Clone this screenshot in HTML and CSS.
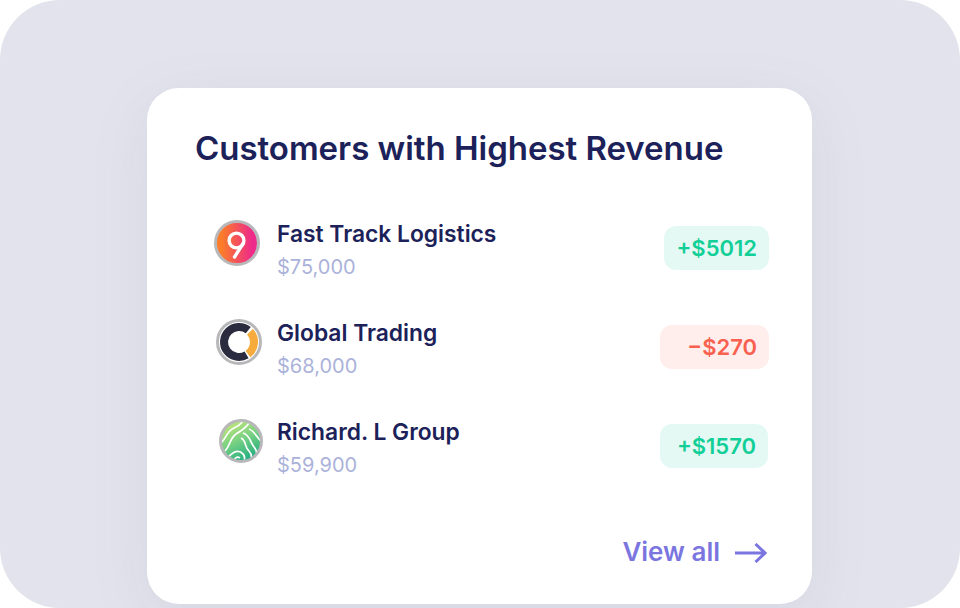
FILE: index.html
```html
<!DOCTYPE html>
<html lang="en">
<head>
<meta charset="utf-8">
<title>Customers with Highest Revenue</title>
<link rel="stylesheet" href="styles.css">
</head>
<body>
<main class="stage">
  <section class="card">
    <h1 class="title">Customers with Highest Revenue</h1>
    <ul class="rows">
      <li class="row">
        <div class="slot">
          <svg class="logo logo-a" viewBox="0 0 46 46" aria-hidden="true">
            <defs><linearGradient id="g1" x1="0" x2="1" y1="0" y2="0"><stop offset="0.15" stop-color="#fb7c2a"/><stop offset="0.85" stop-color="#ee2a8a"/></linearGradient></defs>
            <circle cx="23" cy="23" r="21.5" fill="url(#g1)" stroke="#b8b8bb" stroke-width="3"/>
            <circle cx="22.5" cy="20.5" r="7.4" fill="none" stroke="#fff" stroke-width="3.4"/>
            <path d="M29.4 23 L20.5 37" fill="none" stroke="#fff" stroke-width="3.4" stroke-linecap="round"/>
          </svg>
        </div>
        <div class="info"><div class="name">Fast Track Logistics</div><div class="amount">$75,000</div></div>
        <div class="pill pill-up">+$5012</div>
      </li>
      <li class="row">
        <div class="slot">
          <svg class="logo logo-b" viewBox="0 0 46 46" aria-hidden="true">
            <circle cx="23" cy="23" r="21.5" fill="#fff" stroke="#b8b8bb" stroke-width="3"/>
            <path d="M32.3 11.2 A15 15 0 1 0 30.6 35.9" fill="none" stroke="#2a2b3f" stroke-width="8"/>
            <path d="M34 12.8 A15 15 0 0 1 32 35" fill="none" stroke="#f7ab3c" stroke-width="8"/>
          </svg>
        </div>
        <div class="info"><div class="name">Global Trading</div><div class="amount">$68,000</div></div>
        <div class="pill pill-down">−$270</div>
      </li>
      <li class="row">
        <div class="slot">
          <svg class="logo logo-c" viewBox="0 0 44 44" aria-hidden="true">
            <defs>
              <linearGradient id="g3" x1="0.1" x2="0.6" y1="0" y2="1"><stop offset="0.1" stop-color="#bfe578"/><stop offset="0.55" stop-color="#74cf83"/><stop offset="1" stop-color="#22ae80"/></linearGradient>
              <clipPath id="c3"><circle cx="22" cy="22" r="19"/></clipPath>
            </defs>
            <circle cx="22" cy="22" r="20.5" fill="url(#g3)" stroke="#b8b8bb" stroke-width="3"/>
            <g clip-path="url(#c3)" fill="none" stroke="#fff" stroke-width="1.7">
              <path d="M2 24 C8 18 8 12 15 9 C20 7 22 5 24 2"/>
              <path d="M6 32 C12 26 10 20 17 15 C22 12 27 9 30 4"/>
              <path d="M22 19 C28 22 25 28 30 32 C33 35 33 39 32 43"/>
              <path d="M24 14 C31 16 31 23 35 28 C38 31 38 36 37 40"/>
              <path d="M30 10 C36 12 37 18 42 22"/>
              <path d="M8 40 C12 34 18 30 23 34 C26 36 26 40 25 44"/>
              <path d="M14 44 C15 39 18 37 21 39"/>
            </g>
          </svg>
        </div>
        <div class="info"><div class="name">Richard. L Group</div><div class="amount">$59,900</div></div>
        <div class="pill pill-up pill-last">+$1570</div>
      </li>
    </ul>
    <a class="more" href="#">View all
      <svg class="arrow" viewBox="0 0 32 20" aria-hidden="true"><path d="M0 10 H30 M20.5 1 L30 10 L20.5 19" fill="none" stroke="#7b75e0" stroke-width="3"/></svg>
    </a>
  </section>
</main>
</body>
</html>
```

FILE: styles.css
```css
* { box-sizing: border-box; }
html, body { margin: 0; padding: 0; background: #fff; }
.stage {
  width: 960px;
  height: 608px;
  padding: 88px 148px 4px 147px;
  background: #e2e3ec;
  border-radius: 60px;
  overflow: hidden;
  font-family: Inter, "Liberation Sans", sans-serif;
}
.card {
  height: 516px;
  padding: 38px 43px 0 48px;
  background: #fff;
  border-radius: 32px;
  box-shadow: 0 16px 60px rgba(120, 122, 150, 0.11);
  display: flex;
  flex-direction: column;
}
.title {
  margin: 0;
  font-size: 33px;
  line-height: 44px;
  font-weight: 600;
  letter-spacing: -0.03px;
  color: #1c2259;
}
.rows {
  list-style: none;
  margin: 49px 0 0;
  padding: 0 0 0 19px;
  display: flex;
  flex-direction: column;
  gap: 40px;
}
.row {
  display: flex;
  align-items: flex-start;
  height: 59px;
}
.slot { width: 63px; height: 47px; flex: none; display: flex; align-items: center; }
.logo { display: block; }
.logo-a { width: 46px; height: 46px; }
.logo-b { width: 46px; height: 46px; margin-left: 2px; }
.logo-c { width: 44px; height: 44px; margin-left: 5px; }
.info { flex: 1; padding-top: 1px; }
.name {
  font-size: 22.8px;
  line-height: 28px;
  font-weight: 600;
  color: #1c2259;
}
.amount {
  margin-top: 7px;
  font-size: 20px;
  line-height: 24px;
  color: #abb2da;
}
.pill {
  height: 44px;
  margin-top: 7px;
  padding: 0 12px;
  display: flex;
  align-items: center;
  justify-content: flex-end;
  border-radius: 12px;
  font-size: 22px;
  font-weight: 600;
}
.pill-up { width: 105px; background: #e5f9f4; color: #12cf97; }
.pill-down { width: 109px; background: #ffeeec; color: #f8604f; }
.pill-last { width: 108px; margin-right: 1px; }
.more {
  margin-top: 59px;
  margin-right: 2px;
  align-self: flex-end;
  display: flex;
  align-items: center;
  gap: 15px;
  font-size: 26px;
  line-height: 34px;
  font-weight: 600;
  color: #7b75e0;
  text-decoration: none;
}
.arrow { width: 32px; height: 20px; margin-top: 1px; }
```
